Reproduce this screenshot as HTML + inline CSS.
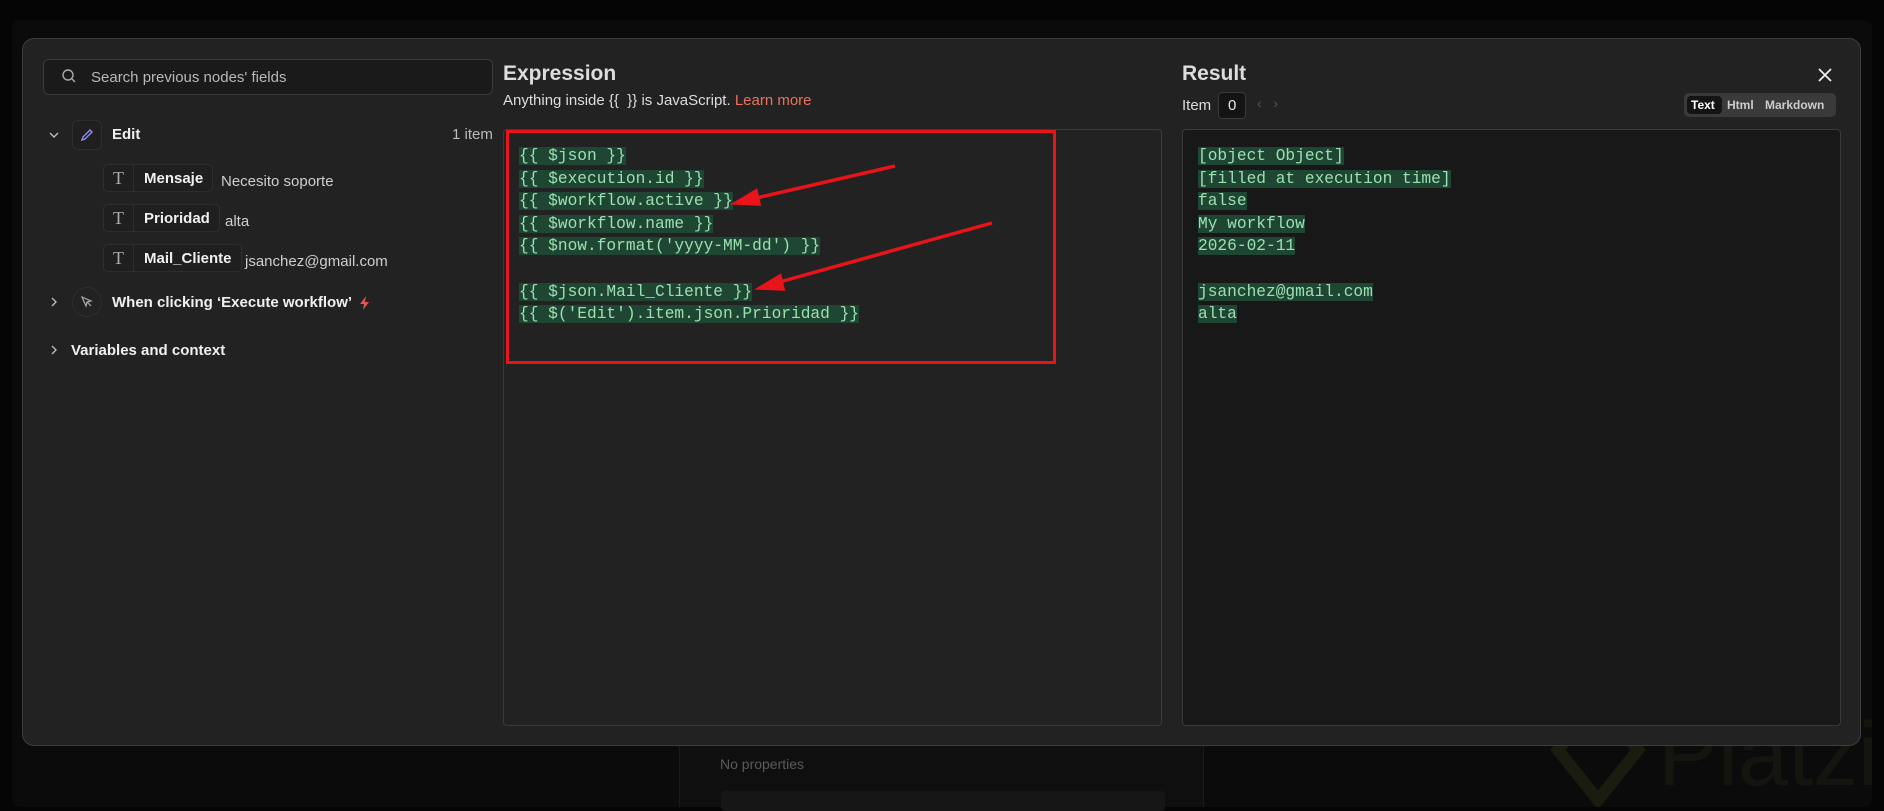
<!DOCTYPE html>
<html><head><meta charset="utf-8"><style>
*{box-sizing:border-box;margin:0;padding:0}
body{width:1884px;height:807px;background:#050505;position:relative;overflow:hidden;font-family:"Liberation Sans",sans-serif;color:#e6e6e6}
.abs{position:absolute}
.modal{left:22px;top:38px;width:1839px;height:708px;background:#222222;border:1px solid #3d3d3d;border-radius:12px}
.search{left:43px;top:59px;width:450px;height:36px;background:#1a1a1a;border:1px solid #3a3a3a;border-radius:6px;font-size:15px;color:#b8b8b8;padding:9px 0 0 47px}
.pill{height:28px;border:1px solid #2e2e2e;border-radius:5px;background:#1f1f1f;font-size:15px;font-weight:bold;color:#f0f0f0;display:flex;align-items:center}
.pill .t{width:30px;height:100%;border-right:1px solid #2e2e2e;font-family:"Liberation Serif",serif;font-weight:normal;color:#aaa;font-size:18px;text-align:center;line-height:26px}
.pill .n{padding:0 9px 0 10px}
.val{font-size:15px;color:#cfcfcf}
.lbl{font-size:15px;font-weight:bold;color:#f0f0f0}
.code{font-family:"Liberation Mono",monospace;font-size:16.2px;line-height:22.6px;white-space:pre}
.code span{background:#1e4632;color:#9be0b2}
.box{border:1px solid #3a3a3a;border-radius:4px}
</style></head><body>
<div class="abs" style="left:12px;top:20px;width:1860px;height:787px;background:#0b0b0b;border-radius:8px"></div>
<div class="abs" style="left:679px;top:746px;width:525px;height:61px;background:#0f0f0f;border-left:1px solid #1a1a1a;border-right:1px solid #1a1a1a"></div>
<div class="abs" style="left:720px;top:756px;font-size:14px;color:#5a5a5a">No properties</div>
<div class="abs" style="left:721px;top:791px;width:444px;height:20px;background:#161616;border-radius:4px"></div>
<svg class="abs" style="left:1548px;top:690px" width="330" height="117" viewBox="0 0 330 117"><path d="M50 10L10 60 50 110 90 60z" fill="none" stroke="#1a1c10" stroke-width="12"/><text x="110" y="95" font-family="Liberation Sans" font-size="90" fill="#151510">Platzi</text></svg>

<div class="abs modal"></div>
<div class="abs search">Search previous nodes' fields</div>
<svg class="abs" style="left:61px;top:68px" width="16" height="16" viewBox="0 0 16 16"><circle cx="7" cy="7" r="5" fill="none" stroke="#aaa" stroke-width="1.4"/><path d="M11 11l3 3" stroke="#aaa" stroke-width="1.4"/></svg>

<svg class="abs" style="left:48px;top:129px" width="12" height="12" viewBox="0 0 12 12"><path d="M2 4l4 4 4-4" fill="none" stroke="#bbb" stroke-width="1.4"/></svg>
<div class="abs" style="left:72px;top:120px;width:30px;height:30px;border:1px solid #2e2e2e;border-radius:6px;background:#1f1f1f"></div>
<svg class="abs" style="left:79px;top:127px" width="16" height="16" viewBox="0 0 16 16"><path d="M3 13l1-3 7-7 2 2-7 7z" fill="none" stroke="#8a8ff0" stroke-width="1.4"/></svg>
<div class="abs lbl" style="left:112px;top:126px">Edit</div>
<div class="abs val" style="left:452px;top:126px;color:#bbb">1 item</div>

<div class="abs pill" style="left:103px;top:164px"><div class="t">T</div><div class="n">Mensaje</div></div>
<div class="abs val" style="left:221px;top:173px">Necesito soporte</div>
<div class="abs pill" style="left:103px;top:204px"><div class="t">T</div><div class="n">Prioridad</div></div>
<div class="abs val" style="left:225px;top:213px">alta</div>
<div class="abs pill" style="left:103px;top:244px"><div class="t">T</div><div class="n">Mail_Cliente</div></div>
<div class="abs val" style="left:245px;top:253px">jsanchez@gmail.com</div>

<svg class="abs" style="left:48px;top:296px" width="12" height="12" viewBox="0 0 12 12"><path d="M4 2l4 4-4 4" fill="none" stroke="#bbb" stroke-width="1.4"/></svg>
<div class="abs" style="left:72px;top:287px;width:30px;height:30px;border:1px solid #2e2e2e;border-radius:15px"></div>
<svg class="abs" style="left:79px;top:294px" width="16" height="16" viewBox="0 0 16 16"><path d="M3 3l9 4-4 1-1 4z M8 8l4 4" fill="none" stroke="#aaa" stroke-width="1.2"/></svg>
<div class="abs lbl" style="left:112px;top:294px">When clicking ‘Execute workflow’</div>
<svg class="abs" style="left:359px;top:296px" width="12" height="14" viewBox="0 0 12 14"><path d="M7 0L1 8h4l-1 6 6-8H6z" fill="#e0584a"/></svg>

<svg class="abs" style="left:48px;top:344px" width="12" height="12" viewBox="0 0 12 12"><path d="M4 2l4 4-4 4" fill="none" stroke="#bbb" stroke-width="1.4"/></svg>
<div class="abs lbl" style="left:71px;top:342px">Variables and context</div>

<div class="abs" style="left:503px;top:62px;font-size:21px;font-weight:bold;color:#ddd">Expression</div>
<div class="abs" style="left:503px;top:92px;font-size:15px;color:#ddd">Anything inside {{ &nbsp;}} is JavaScript. <span style="color:#e8735f">Learn more</span></div>
<div class="abs box" style="left:503px;top:129px;width:659px;height:597px;background:#222"></div>
<div class="abs code" style="left:519px;top:145px"><span>{{ $json }}</span>
<span>{{ $execution.id }}</span>
<span>{{ $workflow.active }}</span>
<span>{{ $workflow.name }}</span>
<span>{{ $now.format('yyyy-MM-dd') }}</span>

<span>{{ $json.Mail_Cliente }}</span>
<span>{{ $('Edit').item.json.Prioridad }}</span></div>
<div class="abs" style="left:506px;top:130px;width:550px;height:234px;border:3px solid #e8141a"></div>
<svg class="abs" style="left:0;top:0" width="1884" height="807"><g stroke="#e8141a" stroke-width="3.5" fill="#e8141a"><line x1="895" y1="166" x2="752" y2="199"/><path d="M736 203l20-12 3 13z"/><line x1="992" y1="223" x2="776" y2="283"/><path d="M760 288l20-12 3 13z"/></g></svg>

<div class="abs" style="left:1182px;top:62px;font-size:21px;font-weight:bold;color:#ddd">Result</div>
<svg class="abs" style="left:1817px;top:67px" width="16" height="16" viewBox="0 0 16 16"><path d="M2 2l12 12M14 2L2 14" stroke="#eee" stroke-width="1.8"/></svg>
<div class="abs" style="left:1182px;top:97px;font-size:15px;color:#ddd">Item</div>
<div class="abs" style="left:1218px;top:92px;width:28px;height:27px;background:#141414;border:1px solid #3a3a3a;border-radius:4px;font-size:15px;padding:4px 0 0 9px">0</div>
<div class="abs" style="left:1257px;top:95px;font-size:14px;color:#555">‹ &nbsp; ›</div>
<div class="abs" style="left:1684px;top:93px;width:152px;height:24px;background:#3a3a3a;border-radius:5px"></div>
<div class="abs" style="left:1687px;top:96px;width:35px;height:18px;background:#141414;border-radius:4px"></div>
<div class="abs" style="left:1691px;top:98px;font-size:12px;font-weight:bold;color:#fff">Text</div>
<div class="abs" style="left:1727px;top:98px;font-size:12px;font-weight:bold;color:#ccc">Html</div>
<div class="abs" style="left:1765px;top:98px;font-size:12px;font-weight:bold;color:#ccc">Markdown</div>
<div class="abs box" style="left:1182px;top:129px;width:659px;height:597px;background:#181818"></div>
<div class="abs code" style="left:1198px;top:145px"><span>[object Object]</span>
<span>[filled at execution time]</span>
<span>false</span>
<span>My workflow</span>
<span>2026-02-11</span>

<span>jsanchez@gmail.com</span>
<span>alta</span></div>
</body></html>
